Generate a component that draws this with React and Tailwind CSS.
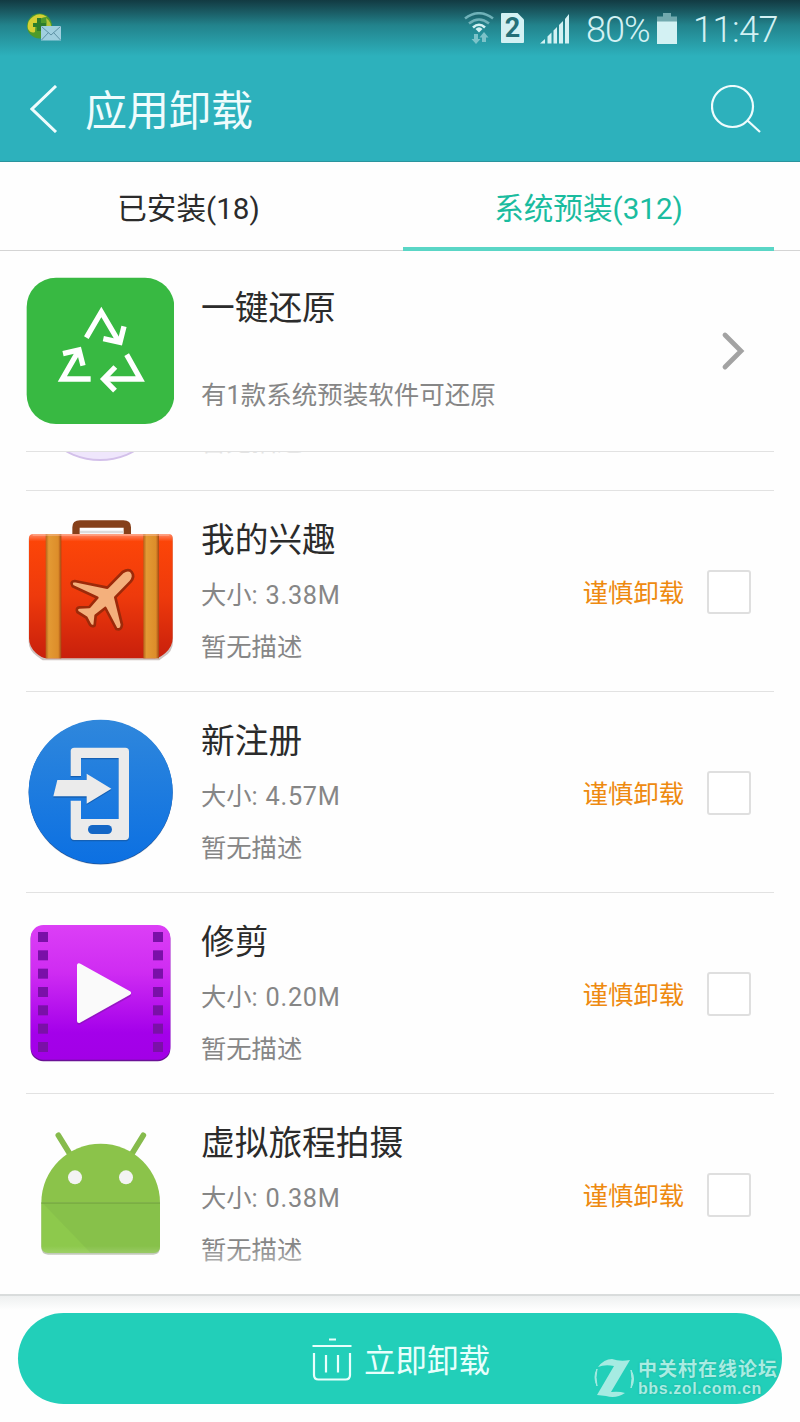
import { useState } from "react";

const RestoreIcon = () => (
  <svg viewBox="78 81 444 444" className="h-[148px] w-[148px] shrink-0">
    <rect x="80" y="83" width="443" height="439" rx="88" fill="#38b942" />
    <g fill="none" stroke="#fff" strokeWidth="16">
      <path d="M259 263 L304 186 L357 276" />
      <path d="M310 266 L360 277 L372 229" />
      <path d="M380 314 L421 387 L312 387" />
      <path d="M346 351 L311 387 L345 422" />
      <path d="M272 387 L187 387 L236 302" />
      <path d="M189 311 L237 300 L249 347" />
    </g>
  </svg>
);

const SuitcaseIcon = () => (
  <svg viewBox="78 54 444 444" className="h-[148px] w-[148px] shrink-0">
    <defs>
      <linearGradient id="caseBody" x1="0" y1="0" x2="0" y2="1">
        <stop offset="0" stopColor="#ff8a68" />
        <stop offset="0.06" stopColor="#fc4508" />
        <stop offset="0.5" stopColor="#ee3a0c" />
        <stop offset="1" stopColor="#c81f0c" />
      </linearGradient>
      <linearGradient id="caseStrap" x1="0" y1="0" x2="1" y2="0">
        <stop offset="0" stopColor="#b4611a" />
        <stop offset="0.2" stopColor="#e39a34" />
        <stop offset="0.8" stopColor="#dd8d2a" />
        <stop offset="1" stopColor="#a34512" />
      </linearGradient>
    </defs>
    <path d="M228 104 V82 Q228 72 240 72 H370 Q382 72 382 82 V104" fill="none" stroke="#86401a" strokeWidth="22" />
    <path d="M240 96 H370" stroke="#dcdcdc" strokeWidth="8" />
    <path
      d="M98 106 H508 Q519 106 519 118 V425 Q519 455 490 472 L478 481 H128 L110 468 Q86 450 86 425 V118 Q86 106 98 106Z"
      fill="#b9aaa6"
      opacity="0.7"
    />
    <path
      d="M100 102 H506 Q518 102 518 114 V415 Q518 440 496 459 Q478 475 465 475 H140 Q126 475 108 459 Q87 440 87 415 V114 Q87 102 100 102Z"
      fill="url(#caseBody)"
    />
    <rect x="137" y="102" width="47" height="373" fill="url(#caseStrap)" />
    <rect x="430" y="102" width="47" height="373" fill="url(#caseStrap)" />
    <path d="M98 105 H508" stroke="#ffc1a6" strokeWidth="5" opacity="0.6" />
    <path
      d="M368 216 Q386 205 395 216 Q405 229 392 245 L346 292 L366 374 Q364 392 349 387 L316 324 L287 347 L284 376 Q276 382 270 374 L259 353 L232 336 Q227 324 238 322 L268 321 L292 293 L218 259 Q209 245 224 243 L322 263 Z"
      fill="#f4b07c"
      stroke="#9c2a0a"
      strokeWidth="8"
      strokeLinejoin="round"
    />
  </svg>
);

const RegisterIcon = () => (
  <svg viewBox="78 57 444 444" className="h-[148px] w-[148px] shrink-0">
    <defs>
      <linearGradient id="regBg" x1="0" y1="0" x2="0" y2="1">
        <stop offset="0" stopColor="#2f87dc" />
        <stop offset="1" stopColor="#0c70e2" />
      </linearGradient>
    </defs>
    <circle cx="302" cy="279" r="216" fill="#b9c5d2" opacity="0.6" />
    <circle cx="302" cy="277" r="216" fill="#1a4f96" />
    <circle cx="302" cy="275" r="216" fill="url(#regBg)" />
    {[
      ["#1560b4", 4],
      ["#ebebeb", 0],
    ].map(([color, dy]) => (
      <g key={color} fill={color} transform={`translate(0 ${dy})`}>
        <path d="M212 228 V154 Q212 143 223 143 H376 Q387 143 387 154 V409 Q387 420 376 420 H223 Q212 420 212 409 V302 H243 V357 H356 V174 H243 V228Z" />
        <path d="M172 240 H260 V221 L334 266 L260 311 V289 H160Z" />
      </g>
    ))}
    <rect x="264" y="375" width="72" height="27" rx="13.5" fill="#1467c6" />
  </svg>
);

const holes = [96, 151, 206, 261, 316, 371, 426];

const TrimIcon = () => (
  <svg viewBox="78 60 444 444" className="h-[148px] w-[148px] shrink-0">
    <defs>
      <linearGradient id="trimBg" x1="0" y1="0" x2="0" y2="1">
        <stop offset="0" stopColor="#dc3ff6" />
        <stop offset="0.35" stopColor="#cf2cf2" />
        <stop offset="0.8" stopColor="#a400ea" />
        <stop offset="1" stopColor="#a200e6" />
      </linearGradient>
    </defs>
    <rect x="92" y="78" width="419" height="406" rx="38" fill="#6a1196" />
    <rect x="92" y="75" width="419" height="404" rx="38" fill="url(#trimBg)" />
    {holes.map((y) => (
      <g key={y} fill="#7a10a8">
        <rect x="114" y={y} width="30" height="30" />
        <rect x="459" y={y} width="30" height="30" />
      </g>
    ))}
    <path d="M237 201 V368 L387 285Z" fill="#8317ac" stroke="#8317ac" strokeWidth="12" strokeLinejoin="round" opacity="0.6" />
    <path d="M237 196 V363 L387 279Z" fill="#fafafa" stroke="#fafafa" strokeWidth="12" strokeLinejoin="round" />
  </svg>
);

const AndroidIcon = () => (
  <svg viewBox="78 63 444 444" className="h-[148px] w-[148px] shrink-0">
    <path d="M124 310 H480 V442 Q480 464 460 464 H144 Q124 464 124 442Z" fill="#b7bfae" />
    <path d="M175 106 L212 166 M430 106 L393 166" stroke="#86bb4c" strokeWidth="17" strokeLinecap="round" />
    <path d="M124 308 A178 177 0 0 1 480 308Z" fill="#8bc34a" />
    <path d="M124 308 H480 V439 Q480 459 460 459 H144 Q124 459 124 439Z" fill="#8dc94c" />
    <path d="M128 310 H480 V439 Q480 459 460 459 H272Z" fill="#84bd49" opacity="0.6" />
    <path d="M124 309 H480" stroke="#76a93f" strokeWidth="4" />
    <circle cx="225" cy="232" r="21" fill="#f3f3f3" />
    <circle cx="378" cy="232" r="21" fill="#f3f3f3" />
  </svg>
);

const apps = [
  { name: "我的兴趣", size: "3.38M", Icon: SuitcaseIcon },
  { name: "新注册", size: "4.57M", Icon: RegisterIcon },
  { name: "修剪", size: "0.20M", Icon: TrimIcon },
  { name: "虚拟旅程拍摄", size: "0.38M", Icon: AndroidIcon },
];

const AppRow = ({ name, size, Icon, checked, onToggle }) => (
  <div className="flex h-[201px] items-center border-b border-[#e2e2e2] pt-[2px] pr-[23px]">
    <Icon />
    <div className="ml-[27px] flex-1 self-start pt-7">
      <h3 className="text-[33.7px] leading-10 text-[#2b2b2b]">{name}</h3>
      <p className="mt-[15px] text-[25.3px] leading-10 text-[#868686]">
        大小<span className="tracking-[0.75px]">: {size}</span>
      </p>
      <p className="mt-3 text-[25.3px] leading-10 text-[#868686]">暂无描述</p>
    </div>
    <span className="pt-1 text-[25.3px] leading-10 text-[#ee8a10]">谨慎卸载</span>
    <button
      onClick={onToggle}
      className={`ml-[23px] h-[44px] w-[44px] rounded-[3px] border-2 border-[#dfdfdf] ${checked ? "bg-[#22cfb9]" : "bg-white"}`}
    />
  </div>
);

const StatusBar = () => (
  <div className="flex h-[56px] items-center bg-linear-to-b from-[#123a42] via-[#22838c] via-45% to-[#2db1bc] text-[#d3f1f3]">
    <svg viewBox="0 0 36 32" className="ml-[26px] h-8 w-9">
      <circle cx="13.500" cy="14" r="12.500" fill="#4e9b2c" />
      <path d="M2 17 A12 12 0 0 1 21 5 Q9 5 9 20 Q5 22 2 17Z" fill="#d5cf35" />
      <path d="M20 6 Q26 10 25 17 L18 21 Q22 14 20 6Z" fill="#b4c338" />
      <path d="M13 6 V19 M7 13 H20" stroke="#2d7d2c" strokeWidth="4" />
      <rect x="15" y="14" width="20" height="14.500" fill="#a0cfdf" />
      <path d="M15.500 14.500 L25 23 L34.500 14.500 M15.500 28 L22.500 20.500 M34.500 28 L27.500 20.500" fill="none" stroke="#5d91a5" />
    </svg>
    <svg viewBox="0 0 30 32" className="ml-auto h-8 w-[30px]" fill="none">
      <g stroke="#6fb1b8" strokeWidth="2.600">
        <path d="M1 6.500 Q15 -4 29 6.500" />
        <path d="M5 11.500 Q15 3.500 25 11.500" />
      </g>
      <path d="M9 15.500 Q15 10 21 15.500" stroke="#d3f1f3" strokeWidth="2.600" />
      <path d="M11.500 17 Q15 13.500 18.500 17 L15 20.500Z" fill="#d3f1f3" />
      <path d="M10 22 H14 V27 H16.500 L12 32 L7.500 27 H10Z M18 30 V25.500 H15.500 L20 20 L24.500 25.500 H22 V30Z" fill="#7cc3c9" />
    </svg>
    <div className="ml-[7px] flex h-[30px] w-[23px] items-center justify-center rounded-[1px] bg-[#d3f1f3] text-[27px] leading-none font-bold text-[#257078] [clip-path:polygon(0_0,72%_0,100%_22%,100%_100%,0_100%)]">
      2
    </div>
    <svg viewBox="0 0 30 31" className="ml-[16px] h-[31px] w-[30px]" fill="#d3f1f3">
      <path d="M0 30.500 L5 26 V30.500Z M7.500 23.500 L11.500 19.500 V30.500 H7.500Z M13.500 17.500 L17 14 V30.500 H13.500Z M19 12 L23 8 V30.500 H19Z M25 6 L29 1 V30.500 H25Z" />
    </svg>
    <span className="ml-[16px] w-[65px] pt-1 text-[36px] leading-10 font-light tracking-[-1px]">80%</span>
    <svg viewBox="0 0 20 31" className="ml-[6px] h-[31px] w-5">
      <path d="M6 0 H14 V3.500 H20 V9 H0 V3.500 H6Z" fill="#71a9ae" />
      <path d="M0 8.500 H20 V31 H0Z" fill="#d3f1f3" />
    </svg>
    <span className="ml-[16px] w-[107px] pt-1 text-[36px] leading-10 font-light tracking-[-0.500px]">11:47</span>
  </div>
);

const Watermark = () => (
  <div className="absolute right-[22px] bottom-[24px] flex items-center text-[#a9ece2] [text-shadow:0_0_2px_#17a898]">
    <svg viewBox="0 0 40 40" className="mr-[4px] h-10 w-10" fill="#a6ebe2">
      <path d="M4 9 Q10 1 18 1 Q26 4 36 2 L17 34 Q25 33 31 35 Q22 41 12 38 L3 37 L20 8 Q11 6 4 9Z" />
      <path d="M3 11 Q-1 19 3 28 Q1 19 3 11Z M37 12 Q42 21 37 30 Q39 20 37 12Z" stroke="#a6ebe2" />
    </svg>
    <div>
      <p className="text-[19px] leading-[22px] font-bold tracking-[1px]">中关村在线论坛</p>
      <p className="font-['Liberation_Sans'] text-[16px] leading-[16px] font-bold tracking-[0.6px]">bbs.zol.com.cn</p>
    </div>
  </div>
);

export default function App() {
  const [tab, setTab] = useState("system");
  const [selected, setSelected] = useState([]);

  const toggle = (name) => {
    setSelected(selected.includes(name) ? selected.filter((n) => n !== name) : [...selected, name]);
  };

  const tabClass = (key) => (tab === key ? "text-[#1abc9f]" : "text-[#2b2b2b]");

  return (
    <div className="h-[1422px] w-[800px] overflow-hidden bg-[#fefefe] font-[Roboto,'Noto_Sans_CJK_SC',sans-serif]">
      <header className="h-[162px] border-b border-[#2a949d] bg-[#2db1bc]">
        <StatusBar />
        <div className="flex h-[105px] items-center pr-[39px] pl-[30px] text-[#effcfd]">
          <svg viewBox="0 0 28 48" className="h-12 w-7" fill="none" stroke="currentColor" strokeWidth="3">
            <path d="M26 1 L2 24 L26 47" />
          </svg>
          <h1 className="ml-[27px] pt-[7px] text-[42px] leading-[48px]">应用卸载</h1>
          <svg viewBox="0 0 50 48" className="ml-auto h-12 w-[50px]" fill="none" stroke="currentColor" strokeWidth="2.200">
            <circle cx="21.500" cy="21.500" r="20.500" />
            <path d="M36.500 35.500 L49 47" />
          </svg>
        </div>
      </header>

      <nav className="flex h-[89px] border-b border-[#d4d4d4] text-[29.6px]">
        <button onClick={() => setTab("installed")} className={`w-[377px] pt-[7px] ${tabClass("installed")}`}>
          已安装(18)
        </button>
        <button
          onClick={() => setTab("system")}
          className={`mr-[26px] -mb-px ml-[26px] flex-1 border-b-4 border-[#5ad6c6] pt-[9px] ${tabClass("system")}`}
        >
          系统预装(312)
        </button>
      </nav>

      <main className="h-[1043px] overflow-hidden px-[26px]">
        <div className="flex h-[201px] items-center border-b border-[#e2e2e2] pr-[29px]">
          <RestoreIcon />
          <div className="ml-[27px] flex-1 self-start pt-[38px]">
            <h3 className="text-[33.7px] leading-10 text-[#2b2b2b]">一键还原</h3>
            <p className="mt-[46px] text-[25.5px] leading-10 text-[#868686]">有1款系统预装软件可还原</p>
          </div>
          <svg viewBox="0 0 24 40" className="h-10 w-6" fill="none" stroke="#a3a3a3" strokeWidth="4.800" strokeLinecap="round">
            <path d="M4 4 L20 20 L4 36" />
          </svg>
        </div>

        {/* row scrolled under the restore entry */}
        <div className="flex h-[39px] items-start overflow-hidden border-b border-[#e2e2e2]">
          <svg viewBox="0 0 148 10" className="h-[10px] w-[148px]">
            <circle cx="74" cy="-61" r="70" fill="#d3c0ea" />
            <circle cx="74" cy="-63" r="70" fill="#efe6fc" />
          </svg>
          <p className="-mt-[24px] ml-[27px] text-[25.3px] leading-[30px] text-[#e4e4e4]">暂无描述</p>
        </div>

        {apps.map((app) => (
          <AppRow key={app.name} {...app} checked={selected.includes(app.name)} onToggle={() => toggle(app.name)} />
        ))}
      </main>

      <footer className="relative h-[128px] border-t-2 border-[#d9dcdc] bg-linear-to-b from-[#eef0f0] to-[#fefefe] to-[14px] px-[18px] pt-[17px]">
        <div className="pointer-events-none absolute -top-[50px] left-0 h-12 w-full bg-linear-to-b from-transparent to-[#fefefe]" />
        <button className="flex h-[91px] w-full items-center justify-center rounded-full bg-[#22cfb9] text-[31.500px] text-[#e8fffc]">
          <svg viewBox="0 0 40 44" className="mr-[12px] ml-[2px] h-11 w-10" fill="none" stroke="currentColor" strokeWidth="2.200">
            <path d="M17 2.500 H24 M0.500 9 H39.500 M2 16 V38 Q2 42.500 6.500 42.500 H33.500 Q38 42.500 38 38 V16 M14 18 V35.500 M26 18 V35.500" />
          </svg>
          <span className="pt-[7px]">立即卸载</span>
        </button>
        <Watermark />
      </footer>
    </div>
  );
}
